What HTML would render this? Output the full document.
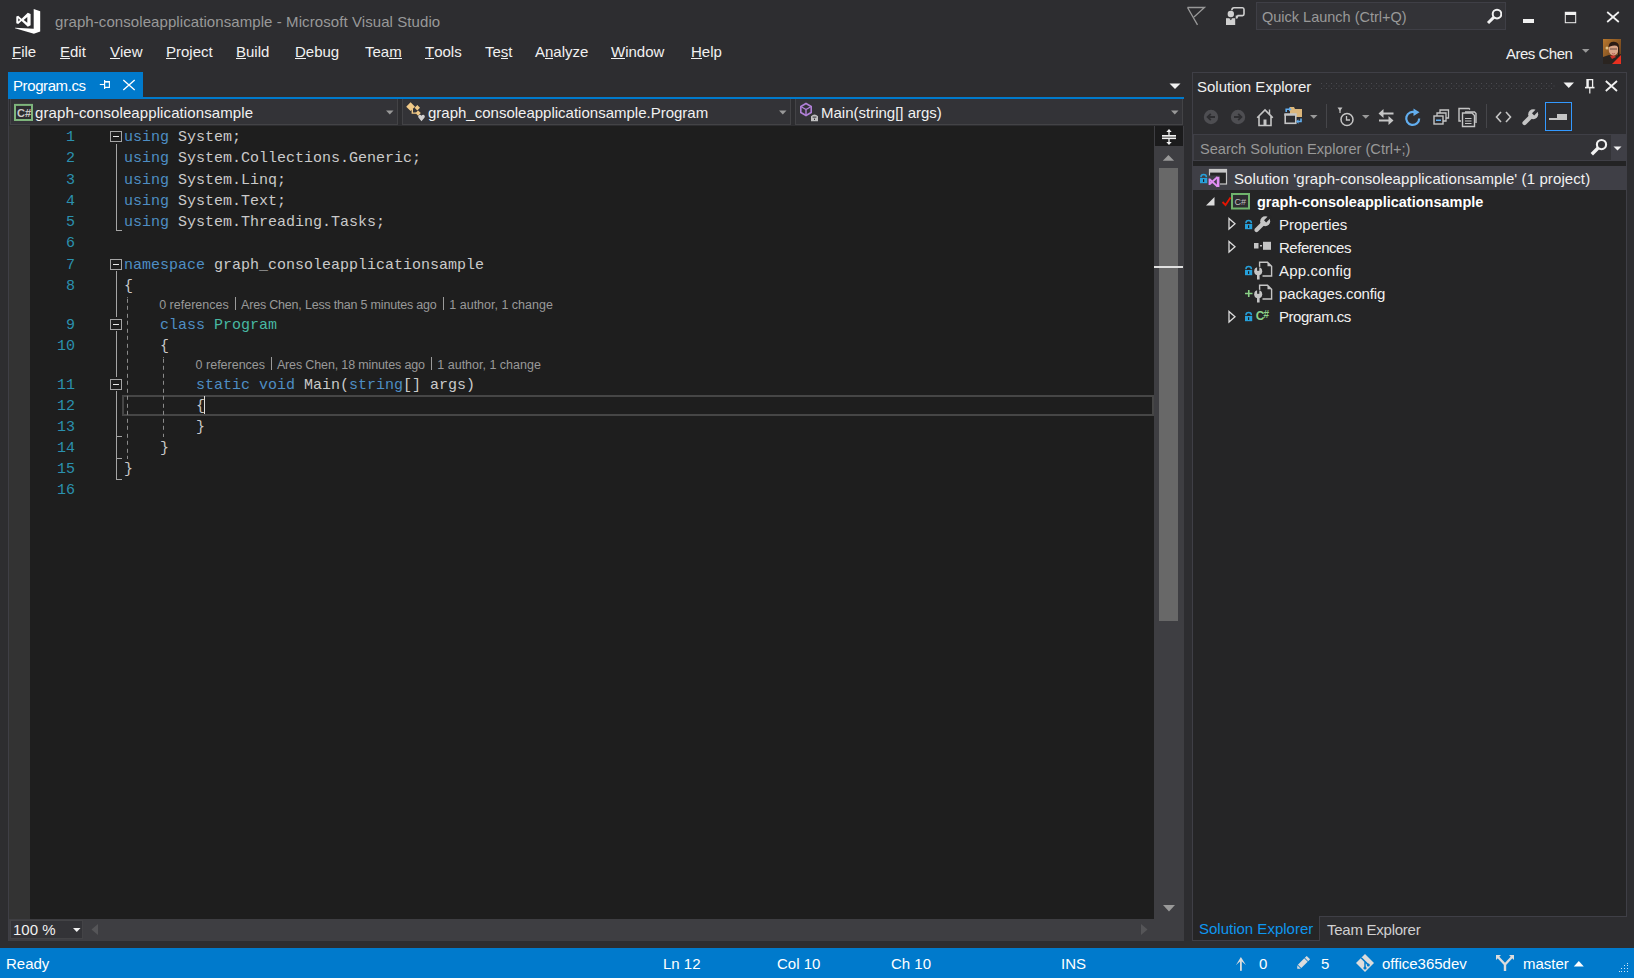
<!DOCTYPE html>
<html><head><meta charset="utf-8">
<style>
*{margin:0;padding:0;box-sizing:border-box}
html,body{width:1634px;height:978px;overflow:hidden;background:#2D2D30;font-family:"Liberation Sans",sans-serif;color:#F1F1F1}
.a{position:absolute}
.t{position:absolute;white-space:pre;line-height:1}
.m{font-family:"Liberation Mono",monospace}
u{text-decoration:none;position:relative}
u:after{content:"";position:absolute;left:0;right:0;bottom:1px;height:1px;background:currentColor}
</style></head><body>

<svg class="a" style="left:0px;top:0px" width="48" height="40" viewBox="0 0 48 40"><path d="M33.7 9 L40.2 11.2 V31.4 L33.9 33.8 L15 28.3 V27.8 L33.7 28.7 Z" fill="#fff"/>
<path fill="#fff" fill-rule="evenodd" d="M16.3 16.6 L18.2 15.8 L21.6 18.8 L27.8 12.8 L30.6 14 V25.3 L27.8 26.8 L21.6 21 L18.2 24 L16.3 23.2 Z M18.3 18.3 V21.5 L20.1 19.9 Z M27.3 17 V22.8 L23.7 19.9 Z"/></svg>
<div class="t " style="left:55px;top:14px;font-size:15px;color:#999999;letter-spacing:0.08px">graph-consoleapplicationsample - Microsoft Visual Studio</div>
<svg class="a" style="left:1185px;top:5px" width="22" height="22" viewBox="0 0 22 22"><path d="M2.5 2.5 H19.5 L9 12 M2.5 2.5 L12.5 19.8" fill="none" stroke="#999" stroke-width="1.3"/></svg>
<svg class="a" style="left:1224px;top:5px" width="24" height="22" viewBox="0 0 24 22"><circle cx="6.8" cy="9" r="3.2" fill="#D0D0D0"/>
<path d="M2 13.2 H11.2 V20 H2 Z" fill="#D0D0D0"/><path d="M5.2 13.2 L6.8 15.2 L8.4 13.2 Z" fill="#2D2D30"/>
<path d="M7.8 5.2 Q8 2.8 10 2.8 H18.5 Q20 2.8 20 4.5 V9 Q20 10.6 18.5 10.6 H14 L12.5 13.5 V10.6" fill="none" stroke="#D0D0D0" stroke-width="1.6"/></svg>
<div class="a" style="left:1256px;top:2px;width:250px;height:28px;background:#333337;border:1px solid #3F3F46"></div>
<div class="t " style="left:1262px;top:10px;font-size:14.5px;color:#999999;">Quick Launch (Ctrl+Q)</div>
<svg class="a" style="left:1484px;top:6px" width="18" height="20" viewBox="0 0 18 20"><circle cx="13" cy="8.1" r="4.3" fill="none" stroke="#F1F1F1" stroke-width="2"/><path d="M10 11.2 L4 17" stroke="#F1F1F1" stroke-width="3"/></svg>
<div class="a" style="left:1523px;top:19px;width:11px;height:4px;background:#F1F1F1;"></div>
<svg class="a" style="left:1563px;top:10px" width="16" height="16" viewBox="0 0 16 16"><rect x="2.3" y="2.3" width="10.4" height="10.4" fill="none" stroke="#F1F1F1" stroke-width="1"/><rect x="2" y="2" width="11" height="3" fill="#F1F1F1"/></svg>
<svg class="a" style="left:1605px;top:10px" width="16" height="14" viewBox="0 0 16 14"><path d="M2.2 2 L13.8 12 M13.8 2 L2.2 12" stroke="#F1F1F1" stroke-width="1.7"/></svg>
<div class="t " style="left:12px;top:44px;font-size:15px;color:#F1F1F1;"><u>F</u>ile</div>
<div class="t " style="left:60px;top:44px;font-size:15px;color:#F1F1F1;"><u>E</u>dit</div>
<div class="t " style="left:110px;top:44px;font-size:15px;color:#F1F1F1;"><u>V</u>iew</div>
<div class="t " style="left:166px;top:44px;font-size:15px;color:#F1F1F1;"><u>P</u>roject</div>
<div class="t " style="left:236px;top:44px;font-size:15px;color:#F1F1F1;"><u>B</u>uild</div>
<div class="t " style="left:295px;top:44px;font-size:15px;color:#F1F1F1;"><u>D</u>ebug</div>
<div class="t " style="left:365px;top:44px;font-size:15px;color:#F1F1F1;">Tea<u>m</u></div>
<div class="t " style="left:425px;top:44px;font-size:15px;color:#F1F1F1;"><u>T</u>ools</div>
<div class="t " style="left:485px;top:44px;font-size:15px;color:#F1F1F1;">Te<u>s</u>t</div>
<div class="t " style="left:535px;top:44px;font-size:15px;color:#F1F1F1;">A<u>n</u>alyze</div>
<div class="t " style="left:611px;top:44px;font-size:15px;color:#F1F1F1;"><u>W</u>indow</div>
<div class="t " style="left:691px;top:44px;font-size:15px;color:#F1F1F1;"><u>H</u>elp</div>
<div class="t " style="left:1506px;top:46px;font-size:15px;color:#F1F1F1;letter-spacing:-0.5px">Ares Chen</div>
<svg class="a" style="left:1581px;top:48px" width="10" height="6" viewBox="0 0 10 6"><path d="M1 1 H8.5 L4.75 4.8 Z" fill="#999"/></svg>
<svg class="a" style="left:1603px;top:39px" width="18" height="25" viewBox="0 0 18 25"><defs><linearGradient id="avbg" x1="0" y1="0" x2="1" y2="1"><stop offset="0" stop-color="#B8782E"/><stop offset="1" stop-color="#5A3418"/></linearGradient></defs>
<rect width="18" height="25" fill="url(#avbg)"/>
<circle cx="4" cy="9" r="1.5" fill="#F0D8A0" opacity=".8"/>
<path d="M0 18 L6 16 L12 17 L18 15 V25 H0 Z" fill="#2A2420"/>
<path d="M9 25 L18 16 V25 Z" fill="#E83020"/>
<path d="M7 17 L11 16 L13 18 L9 20 Z" fill="#C83028"/>
<ellipse cx="10.5" cy="10.5" rx="4.8" ry="6" fill="#D9A488"/>
<path d="M5.5 8 Q6 2.5 11 2.8 Q16 3 16 8 L16.5 17 L15 17 L15 8 Q13 5.5 7 7.5 Z" fill="#2A1A14"/>
<path d="M7 10 H14" stroke="#503830" stroke-width=".8"/>
<path d="M9 14.5 Q10.5 15.5 12 14.5" stroke="#B05050" stroke-width=".8" fill="none"/></svg>
<div class="a" style="left:8px;top:72px;width:135px;height:27px;background:#007ACC;"></div>
<div class="a" style="left:8px;top:97px;width:1176px;height:2px;background:#007ACC;"></div>
<div class="t " style="left:13px;top:78px;font-size:15px;color:#FFFFFF;letter-spacing:-0.4px">Program.cs</div>
<svg class="a" style="left:98px;top:78px" width="14" height="12" viewBox="0 0 14 12"><path d="M1.8 6.5 H6" stroke="#fff" stroke-width="1.1"/><rect x="6" y="2" width="1.2" height="9" fill="#fff"/><path d="M7 3.6 H11.4 V9.4 H7" fill="none" stroke="#fff" stroke-width="1.1"/><rect x="7" y="3" width="4.8" height="1.5" fill="#fff"/></svg>
<svg class="a" style="left:121px;top:78px" width="16" height="14" viewBox="0 0 16 14"><path d="M2.3 2 L13.7 12 M13.7 2 L2.3 12" stroke="#fff" stroke-width="1.35"/></svg>
<svg class="a" style="left:1168px;top:82px" width="14" height="8" viewBox="0 0 14 8"><path d="M1.5 1.5 H12.5 L7 7 Z" fill="#F1F1F1"/></svg>
<div class="a" style="left:8px;top:99px;width:1176px;height:27px;background:#2D2D30;"></div>
<div class="a" style="left:10px;top:99px;width:388px;height:26px;background:#333337;border:1px solid #434346;border-top:none"></div>
<svg class="a" style="left:385px;top:109px" width="10" height="7" viewBox="0 0 10 7"><path d="M1 1.5 H8.5 L4.75 5.5 Z" fill="#999"/></svg>
<div class="a" style="left:402px;top:99px;width:389px;height:26px;background:#333337;border:1px solid #434346;border-top:none"></div>
<svg class="a" style="left:778px;top:109px" width="10" height="7" viewBox="0 0 10 7"><path d="M1 1.5 H8.5 L4.75 5.5 Z" fill="#999"/></svg>
<div class="a" style="left:795px;top:99px;width:388px;height:26px;background:#333337;border:1px solid #434346;border-top:none"></div>
<svg class="a" style="left:1170px;top:109px" width="10" height="7" viewBox="0 0 10 7"><path d="M1 1.5 H8.5 L4.75 5.5 Z" fill="#999"/></svg>
<svg class="a" style="left:12px;top:102px" width="22" height="20" viewBox="0 0 22 20"><rect x="3" y="2.9" width="17" height="15.1" fill="#2D2D30" stroke="#7EB57C" stroke-width="2"/>
<text x="5" y="15" font-family="Liberation Sans" font-size="11" font-weight="bold" fill="#C8C8C8">C#</text></svg>
<div class="t " style="left:35px;top:105px;font-size:15px;color:#F1F1F1;letter-spacing:0.1px">graph-consoleapplicationsample</div>
<svg class="a" style="left:404px;top:101px" width="24" height="22" viewBox="0 0 24 22"><path d="M2.2 5.7 L6.6 1.3 L11 5.7 L6.6 10.1 Z M10.6 6.8 L13.3 4.1 L16 6.8 L13.3 9.5 Z M11.4 12.1 L14.1 9.4 L16.8 12.1 L14.1 14.8 Z" fill="#F0C987"/>
<path d="M8.3 8 V12.1 H12" fill="none" stroke="#F0C987" stroke-width="1.4"/>
<path d="M17.5 20.2 L14.4 16.6 Q13.6 15 14.9 14 Q16.5 13.1 17.5 14.8 Q18.5 13.1 20.1 14 Q21.4 15 20.6 16.6 Z" fill="#D0D0D0"/></svg>
<div class="t " style="left:428px;top:105px;font-size:15px;color:#F1F1F1;">graph_consoleapplicationsample.Program</div>
<svg class="a" style="left:798px;top:101px" width="24" height="22" viewBox="0 0 24 22"><path d="M8 2.5 L13.2 5.5 V11.5 L8 14.5 L2.8 11.5 V5.5 Z" fill="none" stroke="#B180D7" stroke-width="1.6"/>
<path d="M2.8 5.5 L8 8.5 L13.2 5.5 M8 8.5 V14.5" fill="none" stroke="#B180D7" stroke-width="1.4"/>
<path d="M13 15.2 Q16.5 11.8 20 15.2 V20.2 H13 Z" fill="#C0C0C0"/><rect x="14.6" y="15.6" width="3.8" height="1" fill="#333337"/><rect x="16" y="17.6" width="1" height="1.4" fill="#333337"/></svg>
<div class="t " style="left:821px;top:105px;font-size:15px;color:#F1F1F1;">Main(string[] args)</div>
<div class="a" style="left:8px;top:126px;width:1176px;height:815px;background:#2D2D30;"></div>
<div class="a" style="left:8px;top:99px;width:1px;height:842px;background:#3F3F46;"></div>
<div class="a" style="left:9px;top:126px;width:21px;height:793px;background:#333333;"></div>
<div class="a" style="left:30px;top:126px;width:1124px;height:793px;background:#1E1E1E;"></div>
<div class="a" style="left:122px;top:395px;width:1032px;height:21px;background:transparent;border:2px solid #464646"></div>
<div class="t  m" style="left:66px;top:130px;font-size:15px;color:#2B91AF;">1</div>
<div class="t  m" style="left:66px;top:151px;font-size:15px;color:#2B91AF;">2</div>
<div class="t  m" style="left:66px;top:172.5px;font-size:15px;color:#2B91AF;">3</div>
<div class="t  m" style="left:66px;top:193.5px;font-size:15px;color:#2B91AF;">4</div>
<div class="t  m" style="left:66px;top:214.5px;font-size:15px;color:#2B91AF;">5</div>
<div class="t  m" style="left:66px;top:235.5px;font-size:15px;color:#2B91AF;">6</div>
<div class="t  m" style="left:66px;top:257.5px;font-size:15px;color:#2B91AF;">7</div>
<div class="t  m" style="left:66px;top:278.5px;font-size:15px;color:#2B91AF;">8</div>
<div class="t  m" style="left:66px;top:318px;font-size:15px;color:#2B91AF;">9</div>
<div class="t  m" style="left:57px;top:339px;font-size:15px;color:#2B91AF;">10</div>
<div class="t  m" style="left:57px;top:377.5px;font-size:15px;color:#2B91AF;">11</div>
<div class="t  m" style="left:57px;top:398.5px;font-size:15px;color:#2B91AF;">12</div>
<div class="t  m" style="left:57px;top:419.5px;font-size:15px;color:#2B91AF;">13</div>
<div class="t  m" style="left:57px;top:440.5px;font-size:15px;color:#2B91AF;">14</div>
<div class="t  m" style="left:57px;top:462px;font-size:15px;color:#2B91AF;">15</div>
<div class="t  m" style="left:57px;top:483px;font-size:15px;color:#2B91AF;">16</div>
<div class="t  m" style="left:124px;top:130px;font-size:15px;color:#CACACA;"><span style="color:#4E8EC4">using</span><span style="color:#CACACA"> System;</span></div>
<div class="t  m" style="left:124px;top:151px;font-size:15px;color:#CACACA;"><span style="color:#4E8EC4">using</span><span style="color:#CACACA"> System.Collections.Generic;</span></div>
<div class="t  m" style="left:124px;top:172.5px;font-size:15px;color:#CACACA;"><span style="color:#4E8EC4">using</span><span style="color:#CACACA"> System.Linq;</span></div>
<div class="t  m" style="left:124px;top:193.5px;font-size:15px;color:#CACACA;"><span style="color:#4E8EC4">using</span><span style="color:#CACACA"> System.Text;</span></div>
<div class="t  m" style="left:124px;top:214.5px;font-size:15px;color:#CACACA;"><span style="color:#4E8EC4">using</span><span style="color:#CACACA"> System.Threading.Tasks;</span></div>
<div class="t  m" style="left:124px;top:257.5px;font-size:15px;color:#CACACA;"><span style="color:#4E8EC4">namespace</span><span style="color:#CACACA"> graph_consoleapplicationsample</span></div>
<div class="t  m" style="left:124px;top:278.5px;font-size:15px;color:#CACACA;"><span style="color:#CACACA">{</span></div>
<div class="t  m" style="left:160px;top:318px;font-size:15px;color:#CACACA;"><span style="color:#4E8EC4">class</span><span style="color:#CACACA"> </span><span style="color:#48B8A2">Program</span></div>
<div class="t  m" style="left:160px;top:339px;font-size:15px;color:#CACACA;"><span style="color:#CACACA">{</span></div>
<div class="t  m" style="left:196px;top:377.5px;font-size:15px;color:#CACACA;"><span style="color:#4E8EC4">static</span><span style="color:#CACACA"> </span><span style="color:#4E8EC4">void</span><span style="color:#CACACA"> Main(</span><span style="color:#4E8EC4">string</span><span style="color:#CACACA">[] args)</span></div>
<div class="t  m" style="left:196px;top:398.5px;font-size:15px;color:#CACACA;"><span style="color:#CACACA">{</span></div>
<div class="t  m" style="left:196px;top:419.5px;font-size:15px;color:#CACACA;"><span style="color:#CACACA">}</span></div>
<div class="t  m" style="left:160px;top:440.5px;font-size:15px;color:#CACACA;"><span style="color:#CACACA">}</span></div>
<div class="t  m" style="left:124px;top:462px;font-size:15px;color:#CACACA;"><span style="color:#CACACA">}</span></div>
<div class="t " style="left:159.20000000000002px;top:299px;font-size:12.5px;color:#999999;">0 references</div>
<div class="a" style="left:235px;top:297px;width:1px;height:13px;background:#9A9A9A;"></div>
<div class="t " style="left:241.1px;top:299px;font-size:12.5px;color:#999999;letter-spacing:-0.2px">Ares Chen, Less than 5 minutes ago</div>
<div class="a" style="left:443px;top:297px;width:1px;height:13px;background:#9A9A9A;"></div>
<div class="t " style="left:449.29999999999995px;top:299px;font-size:12.5px;color:#999999;">1 author, 1 change</div>
<div class="t " style="left:195.6px;top:359px;font-size:12.5px;color:#999999;">0 references</div>
<div class="a" style="left:271px;top:357px;width:1px;height:13px;background:#9A9A9A;"></div>
<div class="t " style="left:276.9px;top:359px;font-size:12.5px;color:#999999;letter-spacing:-0.14px">Ares Chen, 18 minutes ago</div>
<div class="a" style="left:431px;top:357px;width:1px;height:13px;background:#9A9A9A;"></div>
<div class="t " style="left:437.29999999999995px;top:359px;font-size:12.5px;color:#999999;">1 author, 1 change</div>
<div class="a" style="left:204px;top:396px;width:1px;height:18px;background:#DCDCDC;"></div>
<div class="a" style="left:116px;top:144px;width:1px;height:87px;background:#A5A5A5;"></div>
<div class="a" style="left:116px;top:230px;width:6px;height:1px;background:#A5A5A5;"></div>
<div class="a" style="left:116px;top:271px;width:1px;height:209px;background:#A5A5A5;"></div>
<div class="a" style="left:116px;top:479px;width:6px;height:1px;background:#A5A5A5;"></div>
<div class="a" style="left:116px;top:331px;width:1px;height:128px;background:#A5A5A5;"></div>
<div class="a" style="left:116px;top:458px;width:6px;height:1px;background:#A5A5A5;"></div>
<div class="a" style="left:116px;top:391px;width:1px;height:46px;background:#A5A5A5;"></div>
<div class="a" style="left:116px;top:436px;width:6px;height:1px;background:#A5A5A5;"></div>
<div class="a" style="left:109px;top:129px;width:14px;height:14px;background:#1E1E1E;"></div>
<div class="a" style="left:110px;top:131px;width:12px;height:11px;border:1px solid #A5A5A5;background:#1E1E1E"></div>
<div class="a" style="left:113px;top:136px;width:6px;height:1px;background:#E8E8E8;"></div>
<div class="a" style="left:109px;top:257px;width:14px;height:14px;background:#1E1E1E;"></div>
<div class="a" style="left:110px;top:259px;width:12px;height:11px;border:1px solid #A5A5A5;background:#1E1E1E"></div>
<div class="a" style="left:113px;top:264px;width:6px;height:1px;background:#E8E8E8;"></div>
<div class="a" style="left:109px;top:317px;width:14px;height:14px;background:#1E1E1E;"></div>
<div class="a" style="left:110px;top:319px;width:12px;height:11px;border:1px solid #A5A5A5;background:#1E1E1E"></div>
<div class="a" style="left:113px;top:324px;width:6px;height:1px;background:#E8E8E8;"></div>
<div class="a" style="left:109px;top:377px;width:14px;height:14px;background:#1E1E1E;"></div>
<div class="a" style="left:110px;top:379px;width:12px;height:11px;border:1px solid #A5A5A5;background:#1E1E1E"></div>
<div class="a" style="left:113px;top:384px;width:6px;height:1px;background:#E8E8E8;"></div>
<div class="a" style="left:127px;top:297px;width:1px;height:162px;background:repeating-linear-gradient(to bottom,#8A8A8A 0 4px,transparent 4px 7.5px);background-position:0 1.80px"></div>
<div class="a" style="left:163px;top:357px;width:1px;height:80px;background:repeating-linear-gradient(to bottom,#8A8A8A 0 4px,transparent 4px 7.5px);background-position:0 1.80px"></div>
<div class="a" style="left:1154px;top:126px;width:30px;height:815px;background:#3E3E42;"></div>
<div class="a" style="left:1155px;top:126px;width:28px;height:20px;background:#1B1B1C;"></div>
<svg class="a" style="left:1160px;top:127px" width="18" height="20" viewBox="0 0 18 20"><rect x="2" y="8" width="14" height="4" fill="#808080"/><rect x="2" y="8" width="14" height="1.4" fill="#F1F1F1"/><rect x="2" y="11" width="14" height="1.1" fill="#F1F1F1"/><path d="M9 3.5 V8 M9 12 V16.5" stroke="#F1F1F1" stroke-width="1.3"/><path d="M6.3 5 L9 1.9 L11.7 5 Z M6.3 15 L9 18.1 L11.7 15 Z" fill="#F1F1F1"/></svg>
<svg class="a" style="left:1162px;top:154px" width="13" height="8" viewBox="0 0 13 8"><path d="M0.8 6.8 H12.1 L6.45 0.9 Z" fill="#999"/></svg>
<div class="a" style="left:1159px;top:168px;width:19px;height:453px;background:#686868;"></div>
<div class="a" style="left:1154px;top:266px;width:29px;height:2px;background:#E0E0E0;"></div>
<svg class="a" style="left:1162px;top:904px" width="14" height="9" viewBox="0 0 14 9"><path d="M1 1 H13 L7 7.5 Z" fill="#999"/></svg>
<div class="a" style="left:9px;top:919px;width:1145px;height:22px;background:#3E3E42;"></div>
<div class="a" style="left:10px;top:920px;width:73px;height:19px;background:#333337;border:1px solid #434346"></div>
<div class="t " style="left:13px;top:922px;font-size:15px;color:#F1F1F1;">100 %</div>
<svg class="a" style="left:72px;top:927px" width="10" height="7" viewBox="0 0 10 7"><path d="M1 1 H8.5 L4.75 5 Z" fill="#F1F1F1"/></svg>
<svg class="a" style="left:90px;top:923px" width="9" height="13" viewBox="0 0 9 13"><path d="M8 1 V12 L1.5 6.5 Z" fill="#555558"/></svg>
<svg class="a" style="left:1140px;top:923px" width="9" height="13" viewBox="0 0 9 13"><path d="M1 1 V12 L7.5 6.5 Z" fill="#555558"/></svg>
<div class="a" style="left:1192px;top:72px;width:435px;height:845px;background:#2D2D30;border:1px solid #3F3F46;border-bottom:none"></div>
<div class="t " style="left:1197px;top:79px;font-size:15px;color:#F1F1F1;">Solution Explorer</div>
<div class="a" style="left:1321px;top:83px;width:235px;height:7px;background-image:radial-gradient(circle at 0.5px 0.5px,#4A4A4F 0.6px,transparent 0.7px),radial-gradient(circle at 0.5px 0.5px,#4A4A4F 0.6px,transparent 0.7px);background-size:5px 5px,5px 5px;background-position:0 0,2.5px 2.5px"></div>
<svg class="a" style="left:1562px;top:80px" width="14" height="10" viewBox="0 0 14 10"><path d="M1.5 2.5 H12 L6.75 8 Z" fill="#F1F1F1"/></svg>
<svg class="a" style="left:1583px;top:78px" width="14" height="17" viewBox="0 0 14 17"><path d="M4.2 9 V1.6 H9.6 V9" fill="none" stroke="#F1F1F1" stroke-width="1.3"/><rect x="3.6" y="1" width="2.2" height="8" fill="#F1F1F1"/><rect x="2" y="8.8" width="9.5" height="1.6" fill="#F1F1F1"/><rect x="6.2" y="10" width="1.2" height="5.5" fill="#F1F1F1"/></svg>
<svg class="a" style="left:1604px;top:80px" width="15" height="12" viewBox="0 0 15 12"><path d="M1.8 1 L13 11 M13 1 L1.8 11" stroke="#F1F1F1" stroke-width="1.8"/></svg>
<svg class="a" style="left:1202px;top:108px" width="18" height="18" viewBox="0 0 18 18"><circle cx="9" cy="9" r="7.2" fill="#4E4E52"/><path d="M13 9 H6 M8.8 5.8 L5.6 9 L8.8 12.2" fill="none" stroke="#2D2D30" stroke-width="1.8"/></svg>
<svg class="a" style="left:1229px;top:108px" width="18" height="18" viewBox="0 0 18 18"><circle cx="9" cy="9" r="7.2" fill="#4E4E52"/><path d="M5 9 H12 M9.2 5.8 L12.4 9 L9.2 12.2" fill="none" stroke="#2D2D30" stroke-width="1.8"/></svg>
<svg class="a" style="left:1255px;top:106px" width="20" height="21" viewBox="0 0 20 21"><path d="M2.2 11.8 L10 4 L17.8 11.8 M4 10 V19.5 H16 V10" fill="none" stroke="#C5C5C5" stroke-width="1.6"/><rect x="8.5" y="13.5" width="3" height="6" fill="#C5C5C5"/><path d="M14.5 3.5 V8" stroke="#C5C5C5" stroke-width="1.4"/></svg>
<svg class="a" style="left:1282px;top:104px" width="22" height="22" viewBox="0 0 22 22"><path d="M8 3 H12 L13 5 H20 V13 H8 Z" fill="#DCB67A"/>
<rect x="3.2" y="10.3" width="10.6" height="9" fill="#2D2D30" stroke="#C5C5C5" stroke-width="1.6"/><rect x="2.4" y="9.5" width="12.2" height="2.2" fill="#C5C5C5"/>
<path d="M4.2 8 V5.3 H7.5" fill="none" stroke="#62AEEF" stroke-width="1.6"/><path d="M7 3 L9.5 5.3 L7 7.6 Z" fill="#62AEEF"/>
<path d="M19 14.5 V17.5 H16" fill="none" stroke="#62AEEF" stroke-width="1.6"/><path d="M16.5 15.2 L14 17.5 L16.5 19.8 Z" fill="#62AEEF"/></svg>
<svg class="a" style="left:1309px;top:114px" width="10" height="6" viewBox="0 0 10 6"><path d="M1 1 H8.5 L4.75 4.8 Z" fill="#999"/></svg>
<div class="a" style="left:1326px;top:104px;width:1px;height:24px;background:#46464A;"></div>
<svg class="a" style="left:1336px;top:106px" width="20" height="22" viewBox="0 0 20 22"><path d="M1.5 1.5 H6.5 L4 5 Z" fill="#C5C5C5"/><path d="M4 4 V7" stroke="#C5C5C5" stroke-width="1.2"/><circle cx="11" cy="13.5" r="6" fill="none" stroke="#C5C5C5" stroke-width="1.5"/><path d="M10.5 10 V14 H14" fill="none" stroke="#C5C5C5" stroke-width="1.3"/></svg>
<svg class="a" style="left:1361px;top:114px" width="10" height="6" viewBox="0 0 10 6"><path d="M1 1 H8.5 L4.75 4.8 Z" fill="#999"/></svg>
<svg class="a" style="left:1377px;top:106px" width="18" height="22" viewBox="0 0 18 22"><path d="M16.5 7.5 H5 M2 14.5 H13" fill="none" stroke="#C5C5C5" stroke-width="2.2"/><path d="M6.5 3 L1.5 7.5 L6.5 12 Z M11.5 10 L16.5 14.5 L11.5 19 Z" fill="#C5C5C5"/></svg>
<svg class="a" style="left:1403px;top:106px" width="20" height="22" viewBox="0 0 20 22"><path d="M16.2 12.5 A6.5 6.5 0 1 1 12.5 6.6" fill="none" stroke="#62AEEF" stroke-width="2.2"/><path d="M10.5 2.5 L16.5 6.2 L10.5 10 Z" fill="#62AEEF"/></svg>
<svg class="a" style="left:1432px;top:107px" width="18" height="20" viewBox="0 0 18 20"><rect x="2" y="9" width="9" height="8" fill="none" stroke="#C5C5C5" stroke-width="1.4"/><path d="M5 9 V6 H14 V14 H11 M8 6 V3 H16.5 V11 H14" fill="none" stroke="#C5C5C5" stroke-width="1.3"/><rect x="4" y="12.5" width="5" height="1.5" fill="#62AEEF"/></svg>
<svg class="a" style="left:1457px;top:106px" width="21" height="22" viewBox="0 0 21 22"><path d="M4 15 H2 V2.5 H12 L13 3.5 M8 6 H17.5 L19 7.5 V17" fill="none" stroke="#C5C5C5" stroke-width="1.4"/><path d="M5.5 19.5 V7 H15 L17.5 9.5 V20.5 H5.5 Z" fill="none" stroke="#C5C5C5" stroke-width="1.4"/><path d="M8 12.5 H14.5 M8 15 H14.5 M8 17.5 H14.5" stroke="#C5C5C5" stroke-width="1.2"/></svg>
<div class="a" style="left:1486px;top:104px;width:1px;height:24px;background:#46464A;"></div>
<svg class="a" style="left:1495px;top:110px" width="17" height="14" viewBox="0 0 17 14"><path d="M6 2 L1.5 7 L6 12 M11 2 L15.5 7 L11 12" fill="none" stroke="#C5C5C5" stroke-width="1.6"/></svg>
<svg class="a" style="left:1521px;top:108px" width="19" height="19" viewBox="0 0 19 19"><path d="M3.5 15 L10 8.5" stroke="#C5C5C5" stroke-width="4.2" stroke-linecap="round"/><circle cx="12.2" cy="6.3" r="5" fill="#C5C5C5"/><path d="M11 5.2 L13.2 7.4 L18.5 2.1 L16.3 -0.1 Z" fill="#2D2D30"/></svg>
<div class="a" style="left:1545px;top:102px;width:27px;height:29px;background:transparent;border:1px solid #3399FF"></div>
<div class="a" style="left:1549px;top:118px;width:18px;height:2px;background:#C5C5C5;"></div>
<div class="a" style="left:1557px;top:114px;width:10px;height:6px;background:#C5C5C5;"></div>
<div class="a" style="left:1193px;top:134px;width:433px;height:27px;background:#333337;border:1px solid #3F3F46"></div>
<div class="t " style="left:1200px;top:142px;font-size:14.6px;color:#999999;">Search Solution Explorer (Ctrl+;)</div>
<div class="a" style="left:1611px;top:135px;width:15px;height:25px;background:#3F3F46;"></div>
<svg class="a" style="left:1587px;top:137px" width="22" height="22" viewBox="0 0 22 22"><circle cx="14.5" cy="7.6" r="4.6" fill="none" stroke="#F1F1F1" stroke-width="2.1"/><path d="M11.3 10.8 L4.8 17.3" stroke="#F1F1F1" stroke-width="3.4"/></svg>
<svg class="a" style="left:1612px;top:144px" width="12" height="8" viewBox="0 0 12 8"><path d="M1.5 2.5 H9.5 L5.5 6.5 Z" fill="#F1F1F1"/></svg>
<div class="a" style="left:1193px;top:161px;width:433px;height:5px;background:#232324;"></div>
<div class="a" style="left:1193px;top:166px;width:433px;height:750px;background:#252526;"></div>
<div class="a" style="left:1193px;top:166px;width:433px;height:24px;background:#3F3F46;"></div>
<svg class="a" style="left:1199px;top:173px" width="9" height="11" viewBox="0 0 9 11"><path d="M1.9 4.2 A2.75 2.6 0 0 1 7.4 4.2" fill="none" stroke="#26A0DA" stroke-width="1.5"/><rect x="1" y="5" width="7.2" height="5.2" fill="#26A0DA"/><rect x="4" y="6.2" width="1.2" height="2.8" fill="#1E1E1E"/></svg>
<svg class="a" style="left:1207px;top:167px" width="22" height="22" viewBox="0 0 22 22"><rect x="2.5" y="2.5" width="17" height="14.5" fill="#252526" stroke="#C8C8C8" stroke-width="1.2"/><rect x="2" y="2" width="18" height="3.6" fill="#C8C8C8"/><rect x="1" y="8.5" width="12" height="13" fill="#3F3F46"/><path d="M2.5 11.5 V18 M2.3 12 L10.5 19.5 M2.3 17.5 L10.5 10" fill="none" stroke="#E08EF2" stroke-width="1.8"/><rect x="9.8" y="9.8" width="2.6" height="10.2" fill="#E08EF2"/></svg>
<div class="t " style="left:1234px;top:171px;font-size:15px;color:#F1F1F1;letter-spacing:0.1px">Solution 'graph-consoleapplicationsample' (1 project)</div>
<svg class="a" style="left:1204px;top:196px" width="12" height="11" viewBox="0 0 12 11"><path d="M10.5 1 V9.5 H2 Z" fill="#DCDCDC"/></svg>
<svg class="a" style="left:1221px;top:196px" width="11" height="11" viewBox="0 0 11 11"><path d="M1.5 6 L4.5 9 L9.5 1.5" fill="none" stroke="#E51400" stroke-width="1.8"/></svg>
<svg class="a" style="left:1230px;top:192px" width="21" height="18" viewBox="0 0 21 18"><rect x="2" y="2" width="17" height="14.5" fill="#2D2D30" stroke="#6FB36C" stroke-width="2"/><text x="4.5" y="12.5" font-family="Liberation Sans" font-size="9" fill="#C0C0C0">C#</text></svg>
<div class="t " style="left:1257px;top:195px;font-size:14.5px;color:#FFFFFF;font-weight:bold">graph-consoleapplicationsample</div>
<svg class="a" style="left:1227px;top:217px" width="10" height="14" viewBox="0 0 10 14"><path d="M2 1.5 L8 6.8 L2 12 Z" fill="none" stroke="#DCDCDC" stroke-width="1.3"/></svg>
<svg class="a" style="left:1244px;top:219px" width="9" height="11" viewBox="0 0 9 11"><path d="M1.9 4.2 A2.75 2.6 0 0 1 7.4 4.2" fill="none" stroke="#26A0DA" stroke-width="1.5"/><rect x="1" y="5" width="7.2" height="5.2" fill="#26A0DA"/><rect x="4" y="6.2" width="1.2" height="2.8" fill="#1E1E1E"/></svg>
<svg class="a" style="left:1253px;top:215px" width="19" height="19" viewBox="0 0 19 19"><path d="M3.5 15 L10 8.5" stroke="#C5C5C5" stroke-width="4.2" stroke-linecap="round"/><circle cx="12.2" cy="6.3" r="5" fill="#C5C5C5"/><path d="M11 5.2 L13.2 7.4 L18.5 2.1 L16.3 -0.1 Z" fill="#252526"/></svg>
<div class="t " style="left:1279px;top:217px;font-size:15px;color:#F1F1F1;">Properties</div>
<svg class="a" style="left:1227px;top:240px" width="10" height="14" viewBox="0 0 10 14"><path d="M2 1.5 L8 6.8 L2 12 Z" fill="none" stroke="#DCDCDC" stroke-width="1.3"/></svg>
<svg class="a" style="left:1252px;top:240px" width="22" height="12" viewBox="0 0 22 12"><rect x="2" y="3" width="4.5" height="5.5" fill="#C5C5C5"/><rect x="8" y="5" width="2" height="1.5" fill="#C5C5C5"/><rect x="11" y="1.8" width="8" height="8" fill="#C5C5C5"/></svg>
<div class="t " style="left:1279px;top:240px;font-size:15px;color:#F1F1F1;letter-spacing:-0.48px">References</div>
<svg class="a" style="left:1244px;top:265px" width="9" height="11" viewBox="0 0 9 11"><path d="M1.9 4.2 A2.75 2.6 0 0 1 7.4 4.2" fill="none" stroke="#26A0DA" stroke-width="1.5"/><rect x="1" y="5" width="7.2" height="5.2" fill="#26A0DA"/><rect x="4" y="6.2" width="1.2" height="2.8" fill="#1E1E1E"/></svg>
<svg class="a" style="left:1252px;top:260px" width="22" height="21" viewBox="0 0 22 21"><path d="M7.6 7 V2.2 H15.5 L19.6 6.3 V16 H10.5" fill="none" stroke="#C5C5C5" stroke-width="1.4"/><path d="M15.5 2.2 V6.3 H19.6 Z" fill="#C5C5C5"/><circle cx="6.2" cy="11.3" r="4" fill="#C5C5C5"/><rect x="5.1" y="6.5" width="2.2" height="4.3" fill="#252526"/><rect x="5" y="12" width="2.6" height="7.5" fill="#C5C5C5"/></svg>
<div class="t " style="left:1279px;top:263px;font-size:15px;color:#F1F1F1;letter-spacing:0.17px">App.config</div>
<svg class="a" style="left:1244px;top:289px" width="10" height="10" viewBox="0 0 10 10"><path d="M1 4.5 H8.5 M4.75 1 V8" stroke="#89D185" stroke-width="1.6"/></svg>
<svg class="a" style="left:1252px;top:283px" width="22" height="21" viewBox="0 0 22 21"><path d="M7.6 7 V2.2 H15.5 L19.6 6.3 V16 H10.5" fill="none" stroke="#C5C5C5" stroke-width="1.4"/><path d="M15.5 2.2 V6.3 H19.6 Z" fill="#C5C5C5"/><circle cx="6.2" cy="11.3" r="4" fill="#C5C5C5"/><rect x="5.1" y="6.5" width="2.2" height="4.3" fill="#252526"/><rect x="5" y="12" width="2.6" height="7.5" fill="#C5C5C5"/></svg>
<div class="t " style="left:1279px;top:286px;font-size:15px;color:#F1F1F1;letter-spacing:-0.15px">packages.config</div>
<svg class="a" style="left:1227px;top:310px" width="10" height="14" viewBox="0 0 10 14"><path d="M2 1.5 L8 6.8 L2 12 Z" fill="none" stroke="#DCDCDC" stroke-width="1.3"/></svg>
<svg class="a" style="left:1244px;top:311px" width="9" height="11" viewBox="0 0 9 11"><path d="M1.9 4.2 A2.75 2.6 0 0 1 7.4 4.2" fill="none" stroke="#26A0DA" stroke-width="1.5"/><rect x="1" y="5" width="7.2" height="5.2" fill="#26A0DA"/><rect x="4" y="6.2" width="1.2" height="2.8" fill="#1E1E1E"/></svg>
<svg class="a" style="left:1255px;top:309px" width="20" height="14" viewBox="0 0 20 14"><text x="0.8" y="11" font-family="Liberation Sans" font-size="12" font-weight="bold" fill="#8CD088">C</text><text x="8.4" y="8.5" font-family="Liberation Sans" font-size="10" font-weight="bold" fill="#8CD088">#</text></svg>
<div class="t " style="left:1279px;top:309px;font-size:15px;color:#F1F1F1;letter-spacing:-0.48px">Program.cs</div>
<div class="a" style="left:1192px;top:916px;width:128px;height:25px;background:#252526;border:1px solid #3F3F46;border-top:none"></div>
<div class="a" style="left:1319px;top:916px;width:308px;height:1px;background:#3F3F46;"></div>
<div class="t " style="left:1199px;top:921px;font-size:15px;color:#0E97F0;">Solution Explorer</div>
<div class="t " style="left:1327px;top:922px;font-size:15px;color:#D0D0D0;letter-spacing:-0.25px">Team Explorer</div>
<div class="a" style="left:0px;top:948px;width:1634px;height:30px;background:#007ACC;"></div>
<div class="t " style="left:6px;top:956px;font-size:15px;color:#FFFFFF;">Ready</div>
<div class="t " style="left:663px;top:956px;font-size:15px;color:#FFFFFF;">Ln 12</div>
<div class="t " style="left:777px;top:956px;font-size:15px;color:#FFFFFF;">Col 10</div>
<div class="t " style="left:891px;top:956px;font-size:15px;color:#FFFFFF;">Ch 10</div>
<div class="t " style="left:1061px;top:956px;font-size:15px;color:#FFFFFF;">INS</div>
<svg class="a" style="left:1233px;top:955px" width="16" height="17" viewBox="0 0 16 17"><path d="M3 10 L7.9 1.9 L12.9 10 L7.9 5.8 Z" fill="#DCDCDC"/><rect x="7" y="5" width="1.8" height="10.8" fill="#DCDCDC"/></svg>
<div class="t " style="left:1259px;top:956px;font-size:15px;color:#FFFFFF;">0</div>
<svg class="a" style="left:1294px;top:954px" width="18" height="18" viewBox="0 0 18 18"><g transform="rotate(-45 9 9)"><rect x="4.2" y="6.6" width="9" height="4.8" fill="#DCDCDC"/><rect x="14" y="6.6" width="2.6" height="4.8" fill="#DCDCDC"/><path d="M0.8 9 L3.4 6.6 V11.4 Z" fill="#DCDCDC"/></g></svg>
<div class="t " style="left:1321px;top:956px;font-size:15px;color:#FFFFFF;">5</div>
<svg class="a" style="left:1354px;top:953px" width="22" height="20" viewBox="0 0 22 20"><path d="M11 1 L20 10 L11 19 L2 10 Z" fill="#DCDCDC"/><path d="M7.2 4.8 L14.3 11.9 M11 8.5 V14.5" stroke="#007ACC" stroke-width="1.5"/><circle cx="11" cy="15" r="1.6" fill="#007ACC"/><circle cx="14.3" cy="12" r="1.5" fill="#007ACC"/></svg>
<div class="t " style="left:1382px;top:956px;font-size:15px;color:#FFFFFF;">office365dev</div>
<svg class="a" style="left:1494px;top:953px" width="22" height="20" viewBox="0 0 22 20"><path d="M4 4 L11 11.5 V18 M18 4 L11 11.5" fill="none" stroke="#DCDCDC" stroke-width="2.4"/><path d="M2 2 H7 L2 7 Z M20 2 H15 L20 7 Z" fill="#DCDCDC"/></svg>
<div class="t " style="left:1523px;top:956px;font-size:15px;color:#FFFFFF;">master</div>
<svg class="a" style="left:1572px;top:960px" width="13" height="8" viewBox="0 0 13 8"><path d="M1.8 6.4 H11.8 L6.8 1 Z" fill="#fff"/></svg>
<div class="a" style="left:1627px;top:963px;width:1px;height:1px;background:#D0E6F8;"></div>
<div class="a" style="left:1624px;top:965px;width:1px;height:1px;background:#D0E6F8;"></div>
<div class="a" style="left:1627px;top:965px;width:1px;height:1px;background:#D0E6F8;"></div>
<div class="a" style="left:1621px;top:968px;width:1px;height:1px;background:#D0E6F8;"></div>
<div class="a" style="left:1624px;top:968px;width:1px;height:1px;background:#D0E6F8;"></div>
<div class="a" style="left:1627px;top:968px;width:1px;height:1px;background:#D0E6F8;"></div>
<div class="a" style="left:1619px;top:971px;width:1px;height:1px;background:#D0E6F8;"></div>
<div class="a" style="left:1621px;top:971px;width:1px;height:1px;background:#D0E6F8;"></div>
<div class="a" style="left:1624px;top:971px;width:1px;height:1px;background:#D0E6F8;"></div>
<div class="a" style="left:1627px;top:971px;width:1px;height:1px;background:#D0E6F8;"></div>
</body></html>
